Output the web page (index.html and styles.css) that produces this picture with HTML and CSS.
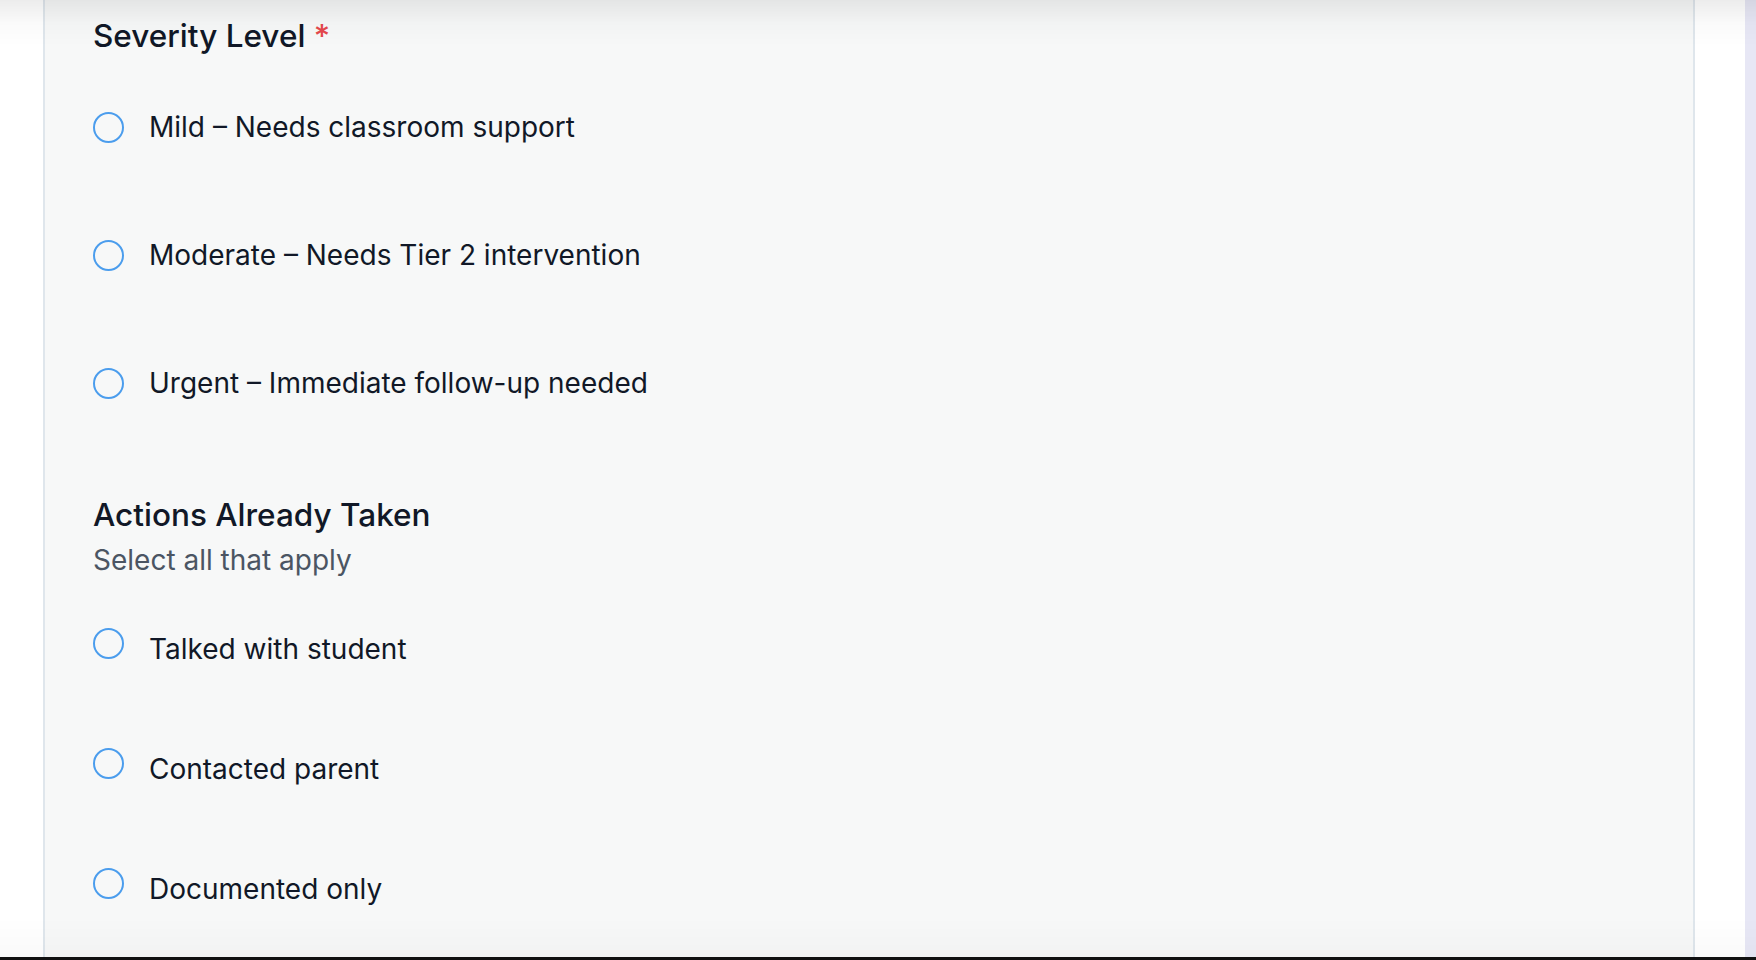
FILE: index.html
```html
<!DOCTYPE html>
<html lang="en">
<head>
<meta charset="utf-8">
<title>Severity Level</title>
<link rel="stylesheet" href="styles.css">
</head>
<body>
<div class="screen">
  <div class="gutter"></div>
  <main class="panel">
    <h2 class="label">Severity Level <span class="req">*</span></h2>
    <div class="radio-group">
      <div class="option"><span class="circle"></span><span class="text">Mild – Needs classroom support</span></div>
      <div class="option"><span class="circle"></span><span class="text">Moderate – Needs Tier 2 intervention</span></div>
      <div class="option"><span class="circle"></span><span class="text">Urgent – Immediate follow-up needed</span></div>
    </div>
    <h2 class="section-title">Actions Already Taken</h2>
    <p class="hint">Select all that apply</p>
    <div class="check-group">
      <div class="option check"><span class="circle"></span><span class="text">Talked with student</span></div>
      <div class="option check"><span class="circle"></span><span class="text">Contacted parent</span></div>
      <div class="option check"><span class="circle"></span><span class="text">Documented only</span></div>
    </div>
  </main>
  <div class="side"></div>
  <div class="track"></div>
</div>
<div class="bottom-bar"></div>
<div class="shade-top"></div>
<div class="shade-bottom"></div>
</body>
</html>
```

FILE: styles.css
```css
* { box-sizing: border-box; }

html, body {
  margin: 0;
  padding: 0;
  background: #ffffff;
  font-family: "Inter", "Noto Sans", "Liberation Sans", sans-serif;
  color: #111827;
  overflow: hidden;
}

.screen {
  display: flex;
  height: 957px;
}

.gutter {
  width: 43px;
  flex: none;
  background: #ffffff;
}

.panel {
  flex: 1;
  background: #f7f8f8;
  border-left: 2px solid #dfe6ec;
  border-right: 2px solid #dfe6ec;
  padding: 12px 48px 0 48px;
  display: flex;
  flex-direction: column;
}

.side {
  width: 50px;
  flex: none;
  background: #ffffff;
}

.track {
  width: 11px;
  flex: none;
  background: #e7e7f5;
}

.bottom-bar {
  height: 3px;
  background: #111111;
}

.label {
  margin: 0;
  font-size: 31.5px;
  line-height: 48px;
  font-weight: 500;
  color: #111827;
}

.req {
  color: #e5484d;
}

.radio-group {
  margin-top: 43px;
  display: flex;
  flex-direction: column;
  gap: 80px;
}

.option {
  display: flex;
  align-items: center;
  height: 48px;
}

.circle {
  width: 31px;
  height: 31px;
  flex: none;
  border: 2px solid #4b9ded;
  border-radius: 50%;
  background: transparent;
  margin-right: 25px;
}

.text {
  font-size: 28px;
  line-height: 48px;
  font-weight: 400;
  color: #111827;
}

.section-title {
  margin: 84px 0 0 0;
  font-size: 31.5px;
  line-height: 48px;
  font-weight: 500;
  color: #111827;
}

.hint {
  margin: 0;
  font-size: 28px;
  line-height: 42px;
  color: #4b5563;
}

.check-group {
  margin-top: 44px;
  display: flex;
  flex-direction: column;
  gap: 72px;
}

.option.check {
  align-items: flex-start;
}

.option.check .circle {
  margin-top: 2.5px;
}

.shade-top {
  position: fixed;
  left: 0;
  top: 0;
  width: 100%;
  height: 46px;
  background: linear-gradient(to bottom, rgba(0, 0, 0, 0.075), rgba(0, 0, 0, 0.02) 50%, rgba(0, 0, 0, 0));
  pointer-events: none;
}

.shade-bottom {
  position: fixed;
  left: 0;
  bottom: 3px;
  width: 100%;
  height: 40px;
  background: linear-gradient(to top, rgba(0, 0, 0, 0.02), rgba(0, 0, 0, 0));
  pointer-events: none;
}
```
